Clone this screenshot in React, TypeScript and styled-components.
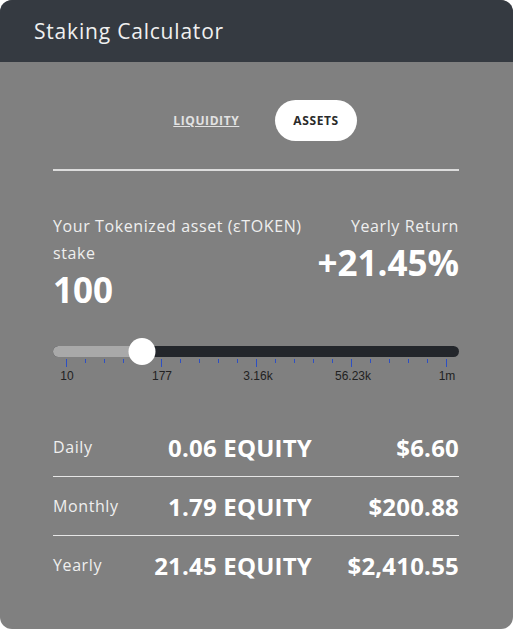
import React from "react";
import styled, { createGlobalStyle } from "styled-components";

const Global = createGlobalStyle`
  html, body { margin: 0; padding: 0; background: #ffffff; }
  body { font-family: "Open Sans", "Liberation Sans", sans-serif; }
`;

const Card = styled.div`
  width: 513px;
  height: 629px;
  border-radius: 12px;
  overflow: hidden;
  background: #808080;
  display: flex;
  flex-direction: column;
`;

const Header = styled.div`
  height: 62px;
  flex: none;
  background: #353a41;
  color: #f0f0f0;
  font-size: 21px;
  letter-spacing: 0.8px;
  display: flex;
  align-items: center;
  padding-left: 34px;
  box-sizing: border-box;
`;

const Body = styled.div`
  padding: 38px 54px 0 53px;
  display: flex;
  flex-direction: column;
`;

const Tabs = styled.div`
  display: flex;
  justify-content: center;
  gap: 18px;
`;

const Tab = styled.button<{ $active?: boolean }>`
  height: 41px;
  padding: 0 18px;
  border: none;
  border-radius: 21px;
  font-family: inherit;
  font-size: 12px;
  letter-spacing: 0.6px;
  font-weight: 700;
  cursor: pointer;
  background: ${(p) => (p.$active ? "#ffffff" : "transparent")};
  color: ${(p) => (p.$active ? "#2a2a2a" : "#e2e2e2")};
  text-decoration: ${(p) => (p.$active ? "none" : "underline")};
`;

const Divider = styled.div`
  height: 2px;
  background: #dcdcdc;
  margin-top: 28px;
`;

const StakeRow = styled.div`
  display: flex;
  justify-content: space-between;
  margin-top: 42px;
  color: #efefef;
`;

const Col = styled.div<{ $right?: boolean }>`
  display: flex;
  flex-direction: column;
  align-items: ${(p) => (p.$right ? "flex-end" : "flex-start")};
`;

const Label = styled.div`
  font-size: 16px;
  letter-spacing: 0.6px;
  line-height: 27px;
`;

const BigValue = styled.div`
  font-size: 35px;
  font-weight: 700;
  color: #ffffff;
  line-height: 46px;
`;

const SliderWrap = styled.div`
  margin-top: 33px;
  position: relative;
  height: 46px;
`;

const Track = styled.div`
  height: 11px;
  border-radius: 6px;
  background: #23262b;
  position: relative;
  overflow: hidden;
`;

const Fill = styled.div`
  position: absolute;
  left: 0;
  top: 0;
  bottom: 0;
  background: #a9a9a9;
`;

const Thumb = styled.div`
  position: absolute;
  top: -8px;
  width: 27px;
  height: 27px;
  border-radius: 50%;
  background: #ffffff;
  transform: translateX(-50%);
`;

const Tick = styled.div<{ $major?: boolean }>`
  position: absolute;
  top: 13px;
  width: 1px;
  height: ${(p) => (p.$major ? 8 : 4)}px;
  background: #2d4fc4;
`;

const TickLabel = styled.div`
  position: absolute;
  top: 23px;
  font-family: "Liberation Sans", Arial, sans-serif;
  font-size: 12px;
  line-height: 14px;
  color: #222;
  transform: translateX(-50%);
`;

const Results = styled.div`
  margin-top: 26px;
  display: flex;
  flex-direction: column;
`;

const ResultRow = styled.div<{ $last?: boolean }>`
  display: grid;
  grid-template-columns: 1fr auto 147px;
  align-items: center;
  height: 58px;
  border-bottom: 1px solid ${(p) => (p.$last ? "transparent" : "#e6e6e6")};
  color: #ffffff;
`;

const RowLabel = styled.div`
  font-size: 16px;
  letter-spacing: 0.6px;
  color: #efefef;
`;

const RowValue = styled.div`
  font-size: 24px;
  letter-spacing: 0.2px;
  font-weight: 700;
  text-align: right;
`;

const majors = [
  { x: 13, label: "10" },
  { x: 108, label: "177" },
  { x: 204, label: "3.16k" },
  { x: 299, label: "56.23k" },
  { x: 393, label: "1m" },
];

const rows = [
  { label: "Daily", eq: "0.06 EQUITY", usd: "$6.60" },
  { label: "Monthly", eq: "1.79 EQUITY", usd: "$200.88" },
  { label: "Yearly", eq: "21.45 EQUITY", usd: "$2,410.55" },
];

export default function App() {
  const ticks: number[] = [];
  for (let i = 0; i <= 20; i++) ticks.push(13 + i * 19);
  const thumbX = 89;
  return (
    <>
      <Global />
      <Card>
        <Header>Staking Calculator</Header>
        <Body>
          <Tabs>
            <Tab>LIQUIDITY</Tab>
            <Tab $active>ASSETS</Tab>
          </Tabs>
          <Divider />
          <StakeRow>
            <Col>
              <Label>Your Tokenized asset (εTOKEN)</Label>
              <Label>stake</Label>
              <BigValue>100</BigValue>
            </Col>
            <Col $right>
              <Label>Yearly Return</Label>
              <BigValue>+21.45%</BigValue>
            </Col>
          </StakeRow>
          <SliderWrap>
            <Track>
              <Fill style={{ width: thumbX }} />
            </Track>
            {ticks.map((x, i) => (
              <Tick key={i} $major={i % 5 === 0} style={{ left: x }} />
            ))}
            {majors.map((m) => (
              <TickLabel key={m.label} style={{ left: m.x + 1 }}>
                {m.label}
              </TickLabel>
            ))}
            <Thumb style={{ left: thumbX }} />
          </SliderWrap>
          <Results>
            {rows.map((r, i) => (
              <ResultRow key={r.label} $last={i === rows.length - 1}>
                <RowLabel>{r.label}</RowLabel>
                <RowValue>{r.eq}</RowValue>
                <RowValue>{r.usd}</RowValue>
              </ResultRow>
            ))}
          </Results>
        </Body>
      </Card>
    </>
  );
}
